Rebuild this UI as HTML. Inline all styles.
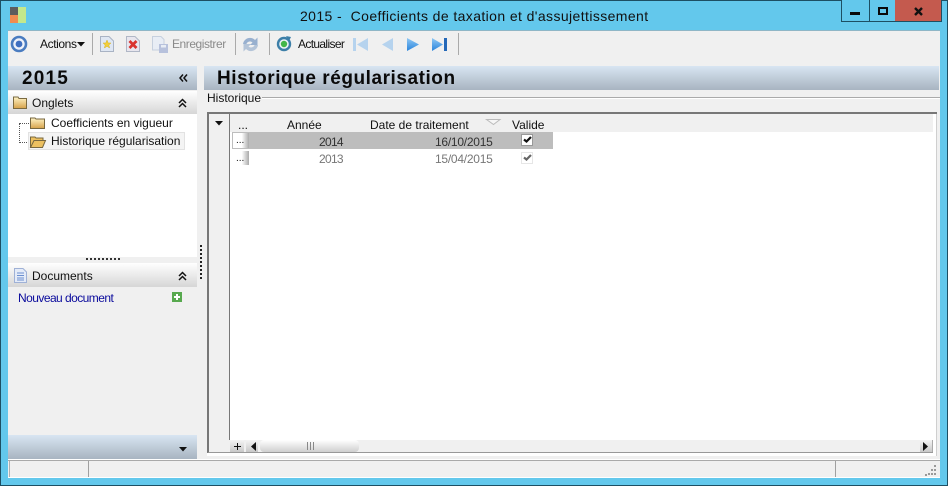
<!DOCTYPE html>
<html><head><meta charset="utf-8"><style>
*{box-sizing:border-box}
html,body{margin:0;padding:0}
body{width:948px;height:486px;position:relative;overflow:hidden;background:#63c8ec;font-family:"Liberation Sans",sans-serif;font-size:12px;color:#111}
.a{position:absolute}
.t{position:absolute;white-space:nowrap;line-height:14px}
.blue{background:linear-gradient(#d8e5f2,#a8b4c1)}
.gray{background:linear-gradient(#fff,#d6d6d6)}
svg{position:absolute;overflow:visible}
</style></head><body>
<svg width="0" height="0" style="left:0;top:0"><defs><linearGradient id="f" x1="0" y1="0" x2="0" y2="1"><stop offset="0" stop-color="#fff4c6"/><stop offset="1" stop-color="#d6a24a"/></linearGradient><linearGradient id="n" x1="0" y1="0" x2="0" y2="1"><stop offset="0" stop-color="#8fc8f4"/><stop offset="1" stop-color="#2a84dc"/></linearGradient></defs></svg>
<div class="a" style="left:0;top:0;width:948px;height:486px;border:1px solid #1d4f63"></div>
<div class="a" style="left:10px;top:7px;width:8px;height:8px;background:#5d5d5d"></div>
<div class="a" style="left:10px;top:15px;width:8px;height:8px;background:#f08c50"></div>
<div class="a" style="left:18px;top:7px;width:8px;height:16px;background:#c4e88c"></div>
<div class="t" style="left:300px;top:8px;font-size:14px;line-height:16px;color:#111;letter-spacing:.4px">2015 -&nbsp; Coefficients de taxation et d'assujettissement</div>
<div class="a" style="left:841px;top:0;width:101px;height:22px;border:1px solid #1d4f63;border-top:0;background:#63c8ec"></div>
<div class="a" style="left:869px;top:0;width:1px;height:21px;background:#1d4f63"></div>
<div class="a" style="left:895px;top:0;width:46px;height:21px;background:#c45a4e"></div>
<div class="a" style="left:850px;top:12px;width:10px;height:3px;background:#0a0a0a"></div>
<div class="a" style="left:878px;top:7px;width:10px;height:8px;border:2px solid #0a0a0a"></div>
<svg style="left:914px;top:7px" width="9" height="9"><path d="M1 1L8 8M8 1L1 8" stroke="#111" stroke-width="2.400"/></svg>

<div class="a" style="left:8px;top:30px;width:932px;height:448px;background:#f0f0f0;border-top:1px solid #8fb6c6"></div>

<!-- toolbar -->
<svg style="left:10px;top:35px" width="18" height="18"><circle cx="9" cy="9" r="7" fill="#eef2fa" stroke="#4a7cc0" stroke-width="2.600"/><circle cx="9" cy="9" r="3.400" fill="#3f6fc0"/></svg>
<div class="t" style="left:40px;top:37px;letter-spacing:-.4px">Actions</div>
<svg style="left:77px;top:42px" width="8" height="5"><path d="M0 0H8L4 4.500Z" fill="#111"/></svg>
<div class="a" style="left:92px;top:33px;width:1px;height:22px;background:#aaa"></div>
<svg style="left:100px;top:36px" width="14" height="16"><path d="M.5 .5H9L13.500 5V15.500H.5Z" fill="#dfe7f3" stroke="#a9b3c4"/><path d="M7 4L8.200 7H11L8.800 9L9.600 12L7 10.300L4.400 12L5.200 9L3 7H5.800Z" fill="#f2cf3a" stroke="#d8b020" stroke-width=".5"/></svg>
<svg style="left:126px;top:36px" width="14" height="16"><path d="M.5 .5H9L13.500 5V15.500H.5Z" fill="#e8e6ee" stroke="#b0b7c6"/><path d="M3.500 5L10.500 12M10.500 5L3.500 12" stroke="#d9332e" stroke-width="2.800"/></svg>
<svg style="left:152px;top:36px" width="16" height="17"><path d="M.5 .5H9L12 3.500V14H.5Z" fill="#e8edf5" stroke="#c6d0de"/><rect x="7" y="8" width="9" height="9" fill="#b7c1dc"/><rect x="9" y="9" width="5" height="2.500" fill="#e8edf5"/></svg>
<div class="t" style="left:172px;top:37px;color:#8a8a8a;letter-spacing:-.45px">Enregistrer</div>
<div class="a" style="left:235px;top:33px;width:1px;height:22px;background:#aaa"></div>
<svg style="left:242px;top:36px" width="17" height="17"><path d="M1 8C2 2 9 0 13 4L15.500 1.500V9H8L10.500 6.500C8 4.500 5 6 4.500 8Z" fill="#98b0cf"/><path d="M16 9C15 15 8 17 4 13L1.500 15.500V8H9L6.500 10.500C9 12.500 12 11 12.500 9Z" fill="#b4c4d8"/></svg>
<div class="a" style="left:269px;top:33px;width:1px;height:22px;background:#aaa"></div>
<svg style="left:276px;top:36px" width="16" height="16"><circle cx="8" cy="8" r="6" fill="#eef3f8" stroke="#3d7fa8" stroke-width="2.400"/><circle cx="8" cy="8" r="3.200" fill="#43b649"/><path d="M10 0L15 1L13 5Z" fill="#3d7fa8"/></svg>
<div class="t" style="left:298px;top:37px;letter-spacing:-.65px">Actualiser</div>
<svg style="left:353px;top:38px" width="16" height="13"><rect x="0" y="0" width="3" height="13" fill="#b6d3ee"/><path d="M15 0V13L4 6.500Z" fill="#b6d3ee"/></svg>
<svg style="left:381px;top:38px" width="13" height="13"><path d="M12 0V13L1 6.500Z" fill="#b6d3ee"/></svg>
<svg style="left:406px;top:38px" width="13" height="13"><path d="M1 0V13L13 6.500Z" fill="url(#n)"/></svg>
<svg style="left:431px;top:38px" width="16" height="13"><path d="M1 0V13L12 6.500Z" fill="url(#n)"/><rect x="13" y="0" width="3" height="13" fill="#2468b8"/></svg>
<div class="a" style="left:458px;top:33px;width:1px;height:22px;background:#aaa"></div>

<!-- left panel -->
<div class="a blue" style="left:8px;top:66px;width:189px;height:24px"></div>
<div class="t" style="left:22px;top:68px;font-size:19px;line-height:21px;font-weight:bold;color:#0a0a0a;letter-spacing:1.200px">2015</div>
<svg style="left:179px;top:74px" width="9" height="8"><path d="M4 .5L1 4L4 7.500M8 .5L5 4L8 7.500" fill="none" stroke="#111" stroke-width="1.500"/></svg>
<div class="a gray" style="left:8px;top:91px;width:189px;height:23px"></div>
<svg style="left:13px;top:96px" width="14" height="13"><path d="M.5 2.500V1H5L6 2.500H13.500V12.500H.5Z" fill="url(#f)" stroke="#7a6a40"/></svg>
<div class="t" style="left:32px;top:96px">Onglets</div>
<svg style="left:178px;top:98px" width="9" height="10"><path d="M1 5L4.500 1.500L8 5M1 9L4.500 5.500L8 9" fill="none" stroke="#111" stroke-width="1.500"/></svg>
<div class="a" style="left:8px;top:114px;width:189px;height:143px;background:#fff"></div>
<div class="a" style="left:19px;top:123px;width:1px;height:20px;border-left:1px dotted #555"></div>
<div class="a" style="left:19px;top:123px;width:10px;border-top:1px dotted #555"></div>
<div class="a" style="left:19px;top:142px;width:10px;border-top:1px dotted #555"></div>
<svg style="left:30px;top:117px" width="15" height="12"><path d="M.5 2V1H5L6 2H14.500V11.500H.5Z" fill="url(#f)" stroke="#77673f"/></svg>
<div class="t" style="left:51px;top:116px">Coefficients en vigueur</div>
<div class="a" style="left:28px;top:132px;width:157px;height:18px;background:#f4f4f4;border:1px solid #e2e2e2"></div>
<svg style="left:30px;top:136px" width="16" height="12"><path d="M.5 11.500V1H5L6 2H13V4.500H4L.5 11.500H12.500L15.500 4.500H4" fill="#ecc060" stroke="#77673f"/></svg>
<div class="t" style="left:51px;top:134px">Historique régularisation</div>
<div class="a" style="left:86px;top:258px;width:35px;height:2px;background:repeating-linear-gradient(90deg,#333 0 2px,transparent 2px 4px)"></div>
<div class="a gray" style="left:8px;top:263px;width:189px;height:24px"></div>
<svg style="left:14px;top:268px" width="13" height="15"><path d="M.5 .5H9L12.500 4V14.500H.5Z" fill="#e4ebf8" stroke="#9fb1d6"/><path d="M3 5H10M3 7.500H10M3 10H10M3 12H10" stroke="#6b8fd0"/></svg>
<div class="t" style="left:32px;top:269px">Documents</div>
<svg style="left:178px;top:271px" width="9" height="10"><path d="M1 5L4.500 1.500L8 5M1 9L4.500 5.500L8 9" fill="none" stroke="#111" stroke-width="1.500"/></svg>
<div class="t" style="left:18px;top:291px;color:#0a0a9c;letter-spacing:-.55px">Nouveau document</div>
<svg style="left:172px;top:292px" width="10" height="10"><rect width="10" height="10" fill="#58a94f"/><path d="M5 2V8M2 5H8" stroke="#fff" stroke-width="2"/></svg>
<div class="a blue" style="left:8px;top:435px;width:189px;height:24px"></div>
<svg style="left:179px;top:447px" width="8" height="5"><path d="M0 0H8L4 4.500Z" fill="#111"/></svg>
<div class="a" style="left:200px;top:245px;width:2px;height:36px;background:repeating-linear-gradient(#222 0 2px,transparent 2px 4px)"></div>

<!-- right panel -->
<div class="a blue" style="left:204px;top:66px;width:735px;height:24px"></div>
<div class="t" style="left:217px;top:68px;font-size:19px;line-height:21px;font-weight:bold;color:#0a0a0a;letter-spacing:.55px">Historique régularisation</div>
<div class="t" style="left:207px;top:91px">Historique</div>
<div class="a" style="left:262px;top:97px;width:678px;height:2px;background:#aaa;border-bottom:1px solid #fff"></div>

<!-- grid -->
<div class="a" style="left:207px;top:112px;width:730px;height:344px;background:#fff;border-right:1px solid #cfcfcf"></div>
<div class="a" style="left:207px;top:112px;width:726px;height:341px;background:#f0f0f0;border-left:2px solid #777;border-bottom:1px solid #999"></div>
<div class="a" style="left:207px;top:112px;width:730px;height:2px;background:#777"></div>
<div class="a" style="left:229px;top:114px;width:1px;height:326px;background:#777"></div>
<div class="a" style="left:230px;top:132px;width:703px;height:308px;background:#fff"></div>
<svg style="left:215px;top:121px" width="8" height="5"><path d="M0 0H8L4 4.500Z" fill="#111"/></svg>
<div class="t" style="left:238px;top:118px">...</div>
<div class="t" style="left:287px;top:118px">Année</div>
<div class="t" style="left:370px;top:118px">Date de traitement</div>
<svg style="left:486px;top:119px" width="15" height="6"><path d="M.5 .5H14L7.500 5.500Z" fill="#f6f6f6" stroke="#bbb"/></svg>
<div class="t" style="left:512px;top:118px">Valide</div>

<div class="a" style="left:232px;top:132px;width:321px;height:17px;background:#bdbdbd"></div>
<div class="a" style="left:233px;top:133px;width:16px;height:15px;background:linear-gradient(90deg,#fff 0,#fff 55%,#aaa)"></div>
<div class="t" style="left:236px;top:134px;font-size:10px">...</div>
<div class="t" style="left:319px;top:135px;color:#333;letter-spacing:-.7px">2014</div>
<div class="t" style="left:435px;top:135px;color:#333;letter-spacing:-.25px">16/10/2015</div>
<div class="a" style="left:521px;top:134px;width:12px;height:12px;background:#fff;border:1px solid #999"></div>
<svg style="left:523px;top:136px" width="9" height="7"><path d="M1 3.500L3.500 5.500L8 1" fill="none" stroke="#111" stroke-width="2.200"/></svg>

<div class="a" style="left:233px;top:151px;width:16px;height:14px;background:linear-gradient(90deg,#fff 0,#fff 55%,#aaa)"></div>
<div class="t" style="left:236px;top:152px;font-size:10px">...</div>
<div class="t" style="left:319px;top:152px;color:#777;letter-spacing:-.7px">2013</div>
<div class="t" style="left:435px;top:152px;color:#777;letter-spacing:-.25px">15/04/2015</div>
<div class="a" style="left:521px;top:152px;width:12px;height:12px;background:#fff;border:1px solid #e6e6e6"></div>
<svg style="left:523px;top:154px" width="9" height="7"><path d="M1 3.500L3.500 5.500L8 1" fill="none" stroke="#666" stroke-width="2.200"/></svg>

<!-- scrollbar -->
<div class="a" style="left:230px;top:440px;width:14px;height:12px;background:linear-gradient(#f4f4f4,#c8c8c8)"></div>
<div class="a" style="left:234px;top:446px;width:7px;height:1px;background:#111"></div>
<div class="a" style="left:237px;top:443px;width:1px;height:7px;background:#111"></div>
<div class="a" style="left:246px;top:440px;width:12px;height:12px;background:linear-gradient(#f4f4f4,#c8c8c8)"></div>
<svg style="left:251px;top:442px" width="6" height="9"><path d="M5 0V9L0 4.500Z" fill="#111"/></svg>
<div class="a" style="left:260px;top:440px;width:99px;height:12px;border-radius:4px;background:linear-gradient(#fff,#cfcfcf)"></div>
<div class="a" style="left:307px;top:442px;width:8px;height:8px;background:repeating-linear-gradient(90deg,#888 0 1px,transparent 1px 3px)"></div>
<div class="a" style="left:920px;top:440px;width:13px;height:12px;background:linear-gradient(#f4f4f4,#c8c8c8);border-right:1px solid #aaa"></div>
<svg style="left:923px;top:442px" width="6" height="9"><path d="M0 0V9L5 4.500Z" fill="#111"/></svg>

<!-- status bar -->
<div class="a" style="left:8px;top:459px;width:932px;height:2px;background:#fff"></div>
<div class="a" style="left:8px;top:460px;width:932px;height:1px;background:#a9a9a9"></div>
<div class="a" style="left:9px;top:461px;width:1px;height:17px;background:#b0b0b0"></div>
<div class="a" style="left:88px;top:461px;width:1px;height:17px;background:#a0a0a0"></div>
<div class="a" style="left:835px;top:461px;width:1px;height:17px;background:#a0a0a0"></div>
<div class="a" style="left:8px;top:477px;width:932px;height:1px;background:#fff"></div>
<svg style="left:925px;top:465px" width="12" height="12"><path d="M9 0h2v2H9zM6 4h2v2H6zM9 4h2v2H9zM3 8h2v2H3zM6 8h2v2H6zM9 8h2v2H9zM0 9h2v2H0z" fill="#999"/></svg>
</body></html>
